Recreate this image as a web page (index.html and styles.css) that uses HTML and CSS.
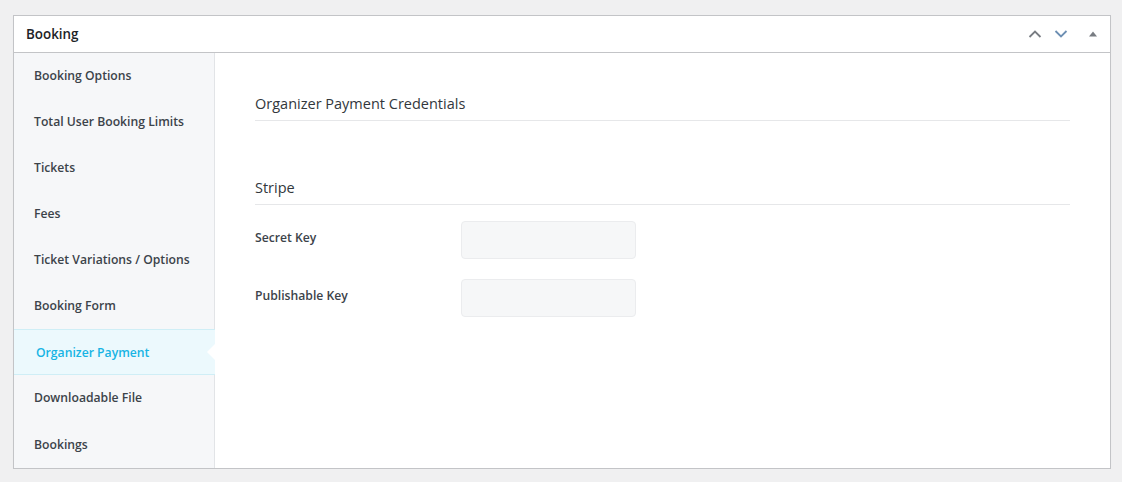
FILE: index.html
```html
<!DOCTYPE html>
<html>
<head>
<meta charset="utf-8">
<link rel="stylesheet" href="styles.css">
</head>
<body>
<div class="box">
  <div class="box-head">
    <h2 class="box-title">Booking</h2>
    <div class="box-actions">
      <svg class="ic" width="16" height="16" viewBox="0 0 16 16"><path d="M2.5 11 L8 5.5 L13.5 11" fill="none" stroke="#787c82" stroke-width="1.8"/></svg>
      <svg class="ic" width="16" height="16" viewBox="0 0 16 16"><path d="M2.5 5 L8 10.5 L13.5 5" fill="none" stroke="#6d8fb3" stroke-width="1.8"/></svg>
      <svg class="ic tri" width="16" height="16" viewBox="0 0 16 16"><path d="M4 10.5 L8 5.5 L12 10.5 Z" fill="#787c82"/></svg>
    </div>
  </div>
  <div class="box-body">
    <ul class="side">
      <li class="side-item">Booking Options</li>
      <li class="side-item">Total User Booking Limits</li>
      <li class="side-item">Tickets</li>
      <li class="side-item">Fees</li>
      <li class="side-item">Ticket Variations / Options</li>
      <li class="side-item">Booking Form</li>
      <li class="side-item active">Organizer Payment</li>
      <li class="side-item">Downloadable File</li>
      <li class="side-item last">Bookings</li>
    </ul>
    <div class="content">
      <h3 class="sec-title first">Organizer Payment Credentials</h3>
      <h3 class="sec-title">Stripe</h3>
      <div class="row">
        <label class="lbl">Secret Key</label>
        <div class="inp"></div>
      </div>
      <div class="row">
        <label class="lbl">Publishable Key</label>
        <div class="inp"></div>
      </div>
    </div>
  </div>
</div>
</body>
</html>
```
FILE: styles.css
```css
html, body {
  margin: 0;
  padding: 0;
  background: #f0f0f1;
  font-family: "Open Sans", "Noto Sans", sans-serif;
  color: #3c434a;
}
body {
  padding: 15px 11px 0 13px;
}
.box {
  width: 1096px;
  height: 452px;
  border: 1px solid #c3c4c7;
  background: #fff;
  box-shadow: 0 1px 1px rgba(0,0,0,0.04);
  display: flex;
  flex-direction: column;
  overflow: hidden;
}
.box-head {
  flex: none;
  height: 36px;
  border-bottom: 1px solid #c3c4c7;
  display: flex;
  align-items: center;
  justify-content: space-between;
  padding: 0 9px 0 12px;
}
.box-title {
  margin: 0;
  font-size: 13.4px;
  font-weight: 600;
  color: #1d2327;
}
.box-actions {
  display: flex;
  align-items: center;
  gap: 10px;
}
.ic { display: block; }
.tri { margin-left: 6px; }
.box-body {
  flex: 1;
  min-height: 0;
  display: flex;
}
.side {
  list-style: none;
  margin: 0;
  padding: 0;
  width: 200px;
  background: #f6f7f9;
  border-right: 1px solid #e2e4e7;
  display: flex;
  flex-direction: column;
}
.side-item {
  flex: none;
  height: 46px;
  display: flex;
  align-items: center;
  padding-left: 20px;
  padding-bottom: 1px;
  font-size: 12.2px;
  font-weight: 600;
  color: #3c434a;
  box-sizing: border-box;
  position: relative;
}
.side-item.last {
  flex: 1;
  padding-bottom: 0;
}
.side-item.active {
  background: #ecf9fd;
  border-top: 1px solid #cfeef6;
  border-bottom: 1px solid #cfeef6;
  color: #17b4e4;
  padding-left: 22px;
  padding-bottom: 0;
  margin-right: -1px;
}
.side-item.active::after {
  content: "";
  position: absolute;
  right: 0;
  top: 50%;
  margin-top: -8px;
  border-top: 8px solid transparent;
  border-bottom: 8px solid transparent;
  border-right: 8px solid #fff;
}
.content {
  flex: 1;
  padding: 41px 40px 0 40px;
}
.sec-title {
  margin: 0;
  font-size: 14.5px;
  font-weight: 500;
  color: #32373c;
  padding-bottom: 6px;
  border-bottom: 1px solid #e6e7e9;
  line-height: 20px;
}
.sec-title.first {
  margin-bottom: 57px;
}
.row {
  display: flex;
  align-items: flex-start;
  margin-top: 16px;
}
.row + .row { margin-top: 20px; }
.lbl {
  width: 206px;
  padding-top: 8px;
  line-height: 18px;
  font-size: 12.2px;
  font-weight: 600;
  color: #3c434a;
}
.inp {
  width: 173px;
  height: 36px;
  background: #f6f7f8;
  border: 1px solid #ebecee;
  border-radius: 4px;
}
```
